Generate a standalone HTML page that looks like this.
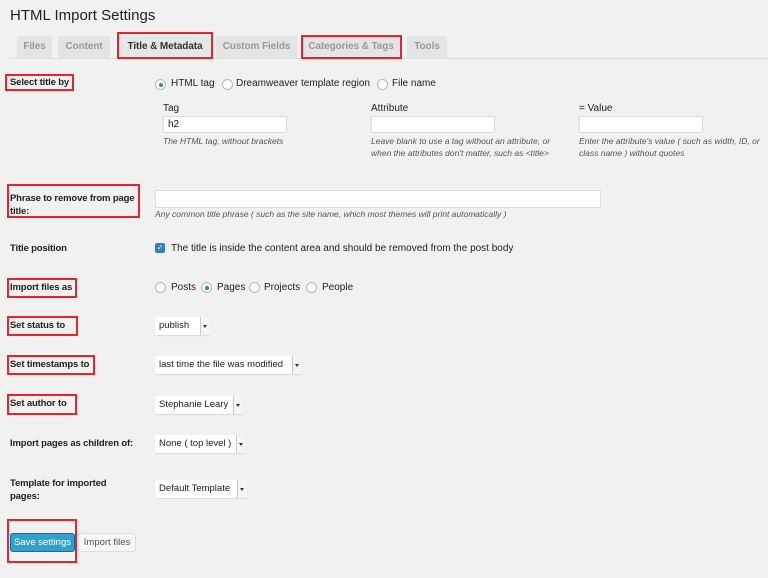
<!DOCTYPE html>
<html><head><meta charset="utf-8"><style>
body{margin:0;width:768px;height:578px;background:#f1f1f1;font-family:"Liberation Sans",sans-serif;color:#222;position:relative;overflow:hidden;font-size:10px}
.a{position:absolute;white-space:nowrap}
h1{position:absolute;left:10px;top:7px;margin:0;font-size:15px;font-weight:normal;color:#222}
.tab{position:absolute;top:36px;height:22px;background:#e4e4e4;color:#999;font-weight:bold;font-size:10px;line-height:22px;text-align:center;letter-spacing:-.1px}
.line{position:absolute;left:10px;right:0;top:58px;height:1px;background:#ddd}
.red{position:absolute;border:2px solid #e8232a;box-sizing:border-box}
.b{font-weight:bold;color:#222;font-size:9.5px;letter-spacing:-.15px}
.in{position:absolute;background:#fff;border:1px solid #ddd;box-sizing:border-box;font-size:10px;padding:2px 4px}
.hint{font-style:italic;font-size:8.5px;color:#555;line-height:12px}
.r{position:absolute;width:11px;height:11px;border:1px solid #b4b9be;border-radius:50%;background:#fff;box-sizing:border-box}
.r.on::after{content:"";position:absolute;left:2.5px;top:2.5px;width:4px;height:4px;border-radius:50%;background:#1e8cbe}
.sel{position:absolute;background:#fff;height:18px;box-shadow:0 1px 1px rgba(0,0,0,.1);font-size:9.5px;line-height:18px;padding-left:4px;box-sizing:border-box}
.sel i{position:absolute;right:0;top:0;width:9px;height:18px;border-left:1px solid #ccc;background:#f4f4f4;font-style:normal}
.sel i::after{content:"";position:absolute;left:2px;top:8px;border:2px solid transparent;border-top:3px solid #333}
</style></head><body>
<h1>HTML Import Settings</h1>
<div class="line"></div>
<div class="tab" style="left:17px;width:35px">Files</div>
<div class="tab" style="left:58px;width:52px">Content</div>
<div class="tab" style="left:118px;width:94px;background:#e6e6e6;color:#333">Title &amp; Metadata</div>
<div class="red" style="left:117px;top:32px;width:96px;height:27px"></div>
<div class="tab" style="left:216px;width:81px">Custom Fields</div>
<div class="tab" style="left:302px;width:98px">Categories &amp; Tags</div>
<div class="red" style="left:301px;top:35px;width:101px;height:24px"></div>
<div class="tab" style="left:407px;width:40px">Tools</div>

<div class="a b" style="left:10px;top:77px">Select title by</div>
<div class="red" style="left:5px;top:74px;width:69px;height:17px"></div>
<div class="r on" style="left:155px;top:79px"></div><div class="a" style="left:171px;top:78px">HTML tag</div>
<div class="r" style="left:222px;top:79px"></div><div class="a" style="left:236px;top:78px">Dreamweaver template region</div>
<div class="r" style="left:377px;top:79px"></div><div class="a" style="left:392px;top:78px">File name</div>
<div class="a" style="left:163px;top:103px">Tag</div>
<div class="in" style="left:163px;top:116px;width:124px;height:17px">h2</div>
<div class="a hint" style="left:163px;top:135px">The HTML tag, without brackets</div>
<div class="a" style="left:371px;top:103px">Attribute</div>
<div class="in" style="left:371px;top:116px;width:124px;height:17px"></div>
<div class="a hint" style="left:371px;top:135px">Leave blank to use a tag without an attribute, or<br>when the attributes don't matter, such as &lt;title&gt;</div>
<div class="a" style="left:579px;top:103px">= Value</div>
<div class="in" style="left:579px;top:116px;width:124px;height:17px"></div>
<div class="a hint" style="left:579px;top:135px">Enter the attribute's value ( such as width, ID, or<br>class name ) without quotes</div>

<div class="a b" style="left:10px;top:192px;line-height:13px">Phrase to remove from page<br>title:</div>
<div class="red" style="left:7px;top:184px;width:133px;height:34px"></div>
<div class="in" style="left:155px;top:190px;width:446px;height:18px"></div>
<div class="a hint" style="left:155px;top:208px">Any common title phrase ( such as the site name, which most themes will print automatically )</div>

<div class="a b" style="left:10px;top:243px">Title position</div>
<div class="a" style="left:155px;top:243px;width:10px;height:10px;background:#2f7fc1;border-radius:2px;color:#fff;font-size:8px;line-height:10px;text-align:center">✓</div>
<div class="a" style="left:171px;top:243px">The title is inside the content area and should be removed from the post body</div>

<div class="a b" style="left:10px;top:282px">Import files as</div>
<div class="red" style="left:7px;top:278px;width:70px;height:20px"></div>
<div class="r" style="left:155px;top:282px"></div><div class="a" style="left:171px;top:282px">Posts</div>
<div class="r on" style="left:201px;top:282px"></div><div class="a" style="left:217px;top:282px">Pages</div>
<div class="r" style="left:249px;top:282px"></div><div class="a" style="left:264px;top:282px">Projects</div>
<div class="r" style="left:306px;top:282px"></div><div class="a" style="left:322px;top:282px">People</div>

<div class="a b" style="left:10px;top:320px">Set status to</div>
<div class="red" style="left:7px;top:316px;width:71px;height:20px"></div>
<div class="sel" style="left:155px;top:317px;width:55px">publish<i></i></div>

<div class="a b" style="left:10px;top:359px">Set timestamps to</div>
<div class="red" style="left:7px;top:355px;width:88px;height:20px"></div>
<div class="sel" style="left:155px;top:356px;width:147px">last time the file was modified<i></i></div>

<div class="a b" style="left:10px;top:398px">Set author to</div>
<div class="red" style="left:7px;top:394px;width:70px;height:21px"></div>
<div class="sel" style="left:155px;top:396px;width:88px">Stephanie Leary<i></i></div>

<div class="a b" style="left:10px;top:438px">Import pages as children of:</div>
<div class="sel" style="left:155px;top:435px;width:91px">None ( top level )<i></i></div>

<div class="a b" style="left:10px;top:477px;line-height:13px">Template for imported<br>pages:</div>
<div class="sel" style="left:155px;top:480px;width:92px">Default Template<i></i></div>

<div class="red" style="left:7px;top:519px;width:70px;height:44px"></div>
<div class="a" style="left:10px;top:533px;width:65px;height:19px;background:#2ea2cc;border:1px solid #0074a2;box-sizing:border-box;border-radius:3px;color:#fff;font-size:9.5px;line-height:17px;text-align:center">Save settings</div>
<div class="a" style="left:78px;top:533px;width:58px;height:19px;background:#f7f7f7;border:1px solid #ddd;box-sizing:border-box;border-radius:3px;color:#555;font-size:9.5px;line-height:17px;text-align:center">Import files</div>
</body></html>
